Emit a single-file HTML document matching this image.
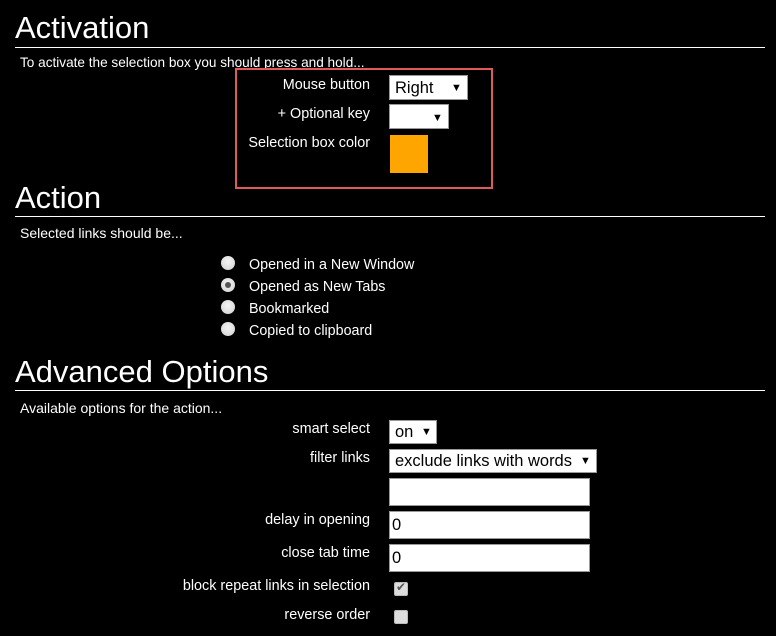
<!DOCTYPE html>
<html><head><meta charset="utf-8"><style>
*{margin:0;padding:0;box-sizing:border-box}
body{width:776px;height:636px;background:#000;color:#fff;font-family:"Liberation Sans",Arial,sans-serif;font-size:14px;position:relative;overflow:hidden}
.a{position:absolute;white-space:nowrap}
h1{position:absolute;left:15px;font-weight:normal;font-size:31px;line-height:30px}
.hr{position:absolute;left:15px;width:750px;height:1px;background:#fff}
.r{text-align:right;font-size:14.4px}
.box{position:absolute;background:#fff;border:1px solid #999;color:#000;font-size:16.5px;line-height:24px;padding-left:5px}
.arr{position:absolute;font-size:11px}
.rad{position:absolute;width:14px;height:14px;border-radius:50%;background:radial-gradient(circle at 50% 40%,#f4f4f4,#d0d0d0);left:221px}
.chk{position:absolute;left:394px;width:14px;height:14px;border-radius:2px;background:#ddd;border:1px solid #bbb}
.o{font-size:14.3px}
</style></head><body>
<h1 style="top:13px">Activation</h1>
<div class="hr" style="top:47px"></div>
<div class="a" style="left:20px;top:55px;font-size:13.6px">To activate the selection box you should press and hold...</div>
<div class="a" style="left:235px;top:68px;width:258px;height:121px;border:2px solid #e05a5a"></div>
<div class="a r" style="left:200px;width:170px;top:77px">Mouse button</div>
<div class="box" style="left:389px;top:75px;width:79px;height:25px">Right<span class="arr" style="left:61px;top:0">▼</span></div>
<div class="a r" style="left:200px;width:170px;top:106px">+ Optional key</div>
<div class="box" style="left:389px;top:104px;width:60px;height:25px"><span class="arr" style="left:42px;top:1px">▼</span></div>
<div class="a r" style="left:200px;width:170px;top:135px">Selection box color</div>
<div class="a" style="left:390px;top:135px;width:38px;height:38px;background:#ffa500"></div>

<h1 style="top:183px">Action</h1>
<div class="hr" style="top:216px"></div>
<div class="a" style="left:20px;top:225px">Selected links should be...</div>
<div class="rad" style="top:256px"></div><div class="a o" style="left:249px;top:257px">Opened in a New Window</div>
<div class="rad" style="top:278px"><div style="position:absolute;left:4px;top:4px;width:6px;height:6px;border-radius:50%;background:#555"></div></div><div class="a o" style="left:249px;top:279px">Opened as New Tabs</div>
<div class="rad" style="top:300px"></div><div class="a o" style="left:249px;top:301px">Bookmarked</div>
<div class="rad" style="top:322px"></div><div class="a o" style="left:249px;top:323px">Copied to clipboard</div>

<h1 style="top:357px">Advanced Options</h1>
<div class="hr" style="top:390px"></div>
<div class="a" style="left:20px;top:400px">Available options for the action...</div>
<div class="a r" style="left:100px;width:270px;top:421px">smart select</div>
<div class="box" style="left:389px;top:420px;width:48px;height:24px;line-height:22px">on<span class="arr" style="left:31px;top:0">▼</span></div>
<div class="a r" style="left:100px;width:270px;top:450px">filter links</div>
<div class="box" style="left:389px;top:449px;width:208px;height:24px;line-height:22px">exclude links with words<span class="arr" style="left:190px;top:0">▼</span></div>
<div class="box" style="left:389px;top:478px;width:201px;height:28px"></div>
<div class="a r" style="left:100px;width:270px;top:512px">delay in opening</div>
<div class="box" style="left:389px;top:511px;width:201px;height:28px;line-height:26px;padding-left:2px">0</div>
<div class="a r" style="left:100px;width:270px;top:545px">close tab time</div>
<div class="box" style="left:389px;top:544px;width:201px;height:28px;line-height:26px;padding-left:2px">0</div>
<div class="a r" style="left:100px;width:270px;top:578px">block repeat links in selection</div>
<div class="chk" style="top:582px"><span style="position:absolute;left:1px;top:-3px;font-size:12px;color:#555">✔</span></div>
<div class="a r" style="left:100px;width:270px;top:607px">reverse order</div>
<div class="chk" style="top:610px"></div>
</body></html>
